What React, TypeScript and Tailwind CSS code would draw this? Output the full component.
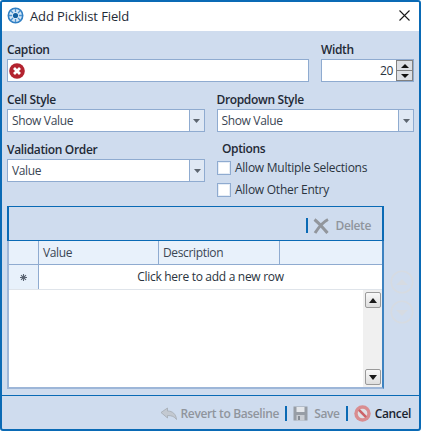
const AppIcon = () => (
  <svg width="17" height="17" viewBox="0 0 17 17">
    <circle cx="8.5" cy="8.5" r="7.2" fill="#d5e6f5" stroke="#2f7fc4" strokeWidth="1.6" />
    <circle cx="8.5" cy="8.5" r="2.6" fill="#14609f" />
    <path d="M8.5 2v3M8.5 12v3M2 8.5h3M12 8.5h3M4 4l2 2M11 11l2 2M13 4l-2 2M6 11l-2 2" stroke="#4b93d1" strokeWidth="1.3" />
  </svg>
);

const ErrorIcon = () => (
  <svg width="16" height="16" viewBox="0 0 16 16">
    <circle cx="8" cy="8" r="7.8" fill="#b3232f" />
    <path d="M5 5l6 6M11 5l-6 6" stroke="#fff" strokeWidth="2.8" />
  </svg>
);

const CloseIcon = () => (
  <svg width="11" height="11" viewBox="0 0 11 11">
    <path d="M0.5 0.5l10 10M10.5 0.5l-10 10" stroke="#1a1a1a" strokeWidth="1.1" />
  </svg>
);

const DeleteIcon = () => (
  <svg width="16" height="16" viewBox="0 0 16 16">
    <path d="M1.5 1.5C6 5 10 10 14.5 15" stroke="#92969c" strokeWidth="3" fill="none" />
    <path d="M15 1.5C10 4 5.5 9.5 2 15" stroke="#92969c" strokeWidth="3" fill="none" />
  </svg>
);

const RevertIcon = () => (
  <svg width="17" height="14" viewBox="0 0 17 14">
    <path d="M1 5.5L7.5 1v3c5 0 8.5 3 9 8.5C14.5 9.5 11.5 8.5 7.5 8.5V11z" fill="#c3c9d1" stroke="#a5abb3" strokeWidth="0.8" />
  </svg>
);

const SaveIcon = () => (
  <svg width="15" height="15" viewBox="0 0 15 15">
    <path d="M0.5 0.5h14v14h-14z" fill="#979da5" />
    <path d="M3.5 1h8v5h-8z" fill="#e4e7eb" />
    <path d="M3.5 9h8v5.5h-8z" fill="#c9cdd3" />
    <path d="M5 10h2v4H5z" fill="#868c94" />
  </svg>
);

const CancelIcon = () => (
  <svg width="17" height="17" viewBox="0 0 17 17">
    <circle cx="8.5" cy="8.5" r="8.2" fill="#d98d90" />
    <circle cx="8.5" cy="8.5" r="4.8" fill="#dfe2e7" />
    <path d="M4.9 4.9l7.2 7.2" stroke="#cc6367" strokeWidth="2.6" />
  </svg>
);

const CircleArrow = ({ up }: { up?: boolean }) => (
  <svg width="24" height="24" viewBox="0 0 24 24">
    <circle cx="12" cy="12" r="10.8" fill="none" stroke="#d6dbe2" strokeWidth="1.6" />
    <path d={up ? "M6 15h12l-6-6z" : "M6 10h12l-6 6z"} fill="#d6dbe2" />
  </svg>
);

const ScrollButton = ({ up }: { up?: boolean }) => (
  <div className="flex h-4 w-4 items-center justify-center rounded-[2px] border border-[#9a9a9a] bg-gradient-to-b from-[#f9f9f9] to-[#dedede]">
    <svg width="8" height="5" viewBox="0 0 8 5">
      <path d={up ? "M0 5h8L4 0z" : "M0 0h8L4 5z"} fill="#1a1a1a" />
    </svg>
  </div>
);

const Label = ({ children, short }: { children: string; short?: boolean }) => (
  <div
    className={
      short
        ? "flex h-[16px] items-center text-[12px] font-semibold leading-none text-[#1f2a36]"
        : "flex h-[18px] items-center text-[12px] font-semibold leading-none text-[#1f2a36]"
    }
  >
    {children}
  </div>
);

const Select = ({ value }: { value: string }) => (
  <div className="flex h-[23px] w-full border border-[#8fabd0] bg-white">
    <div className="flex flex-1 items-center pl-1 text-[12px] text-[#3a4654]">{value}</div>
    <div className="flex w-[15px] items-center justify-center border-l border-[#8fabd0] bg-[#dfe8f4]">
      <svg width="7" height="4" viewBox="0 0 7 4">
        <path d="M0 0h7L3.5 4z" fill="#5d6670" />
      </svg>
    </div>
  </div>
);

const Check = ({ text }: { text: string }) => (
  <div className="flex h-[22px] items-center gap-[4px]">
    <div className="h-[14px] w-[14px] border border-[#8fabd0] bg-white shadow-[inset_0_0_0_1px_#e6edf6]" />
    <span className="text-[12px] tracking-[-0.25px] text-[#2a3440]">{text}</span>
  </div>
);

export default function App() {
  return (
    <div className="h-[431px] w-[421px] overflow-hidden bg-white font-['Open_Sans','Liberation_Sans',sans-serif] tracking-[-0.35px]">
      <div className="flex h-full flex-col overflow-hidden rounded-[3px] border-2 border-[#0a6ab5] bg-[#cfdcee]">
        <div className="flex h-[29px] shrink-0 items-center justify-between bg-white pb-[2px] pl-[5px] pr-[9px]">
          <div className="flex items-center gap-[6px]">
            <AppIcon />
            <span className="pt-[2px] text-[13px] tracking-[-0.1px] text-[#1f2a36]">Add Picklist Field</span>
          </div>
          <CloseIcon />
        </div>

        <div className="flex flex-1 flex-col px-[5px] pt-[10px]">
          <div className="flex gap-[12px]">
            <div className="w-[302px]">
              <Label>Caption</Label>
              <div className="flex h-[23px] items-center border border-[#8fabd0] bg-white pl-[1px]">
                <ErrorIcon />
              </div>
            </div>
            <div className="w-[93px]">
              <Label>Width</Label>
              <div className="flex h-[23px] border border-[#8fabd0] bg-white">
                <div className="flex flex-1 items-center justify-end pr-[3px] text-[12px] text-[#2a3440]">20</div>
                <div className="flex w-[17px] flex-col border border-[#808080] bg-[#dcdfe4]">
                  <div className="flex flex-1 items-center justify-center border-b border-[#808080]">
                    <svg width="8" height="4" viewBox="0 0 8 4"><path d="M0 4h8L4 0z" fill="#111" /></svg>
                  </div>
                  <div className="flex flex-1 items-center justify-center">
                    <svg width="8" height="4" viewBox="0 0 8 4"><path d="M0 0h8L4 4z" fill="#111" /></svg>
                  </div>
                </div>
              </div>
            </div>
          </div>

          <div className="mt-[9px] flex gap-[12px]">
            <div className="w-[198px]">
              <Label>Cell Style</Label>
              <Select value="Show Value" />
            </div>
            <div className="w-[198px]">
              <Label>Dropdown Style</Label>
              <Select value="Show Value" />
            </div>
          </div>

          <div className="mt-[9px] flex gap-[12px]">
            <div className="w-[198px]">
              <Label>Validation Order</Label>
              <Select value="Value" />
            </div>
            <div>
              <div className="pl-[5px]">
                <Label short>Options</Label>
              </div>
              <Check text="Allow Multiple Selections" />
              <Check text="Allow Other Entry" />
            </div>
          </div>

          <div className="mt-[5px] flex gap-[6px]">
            <div className="flex h-[183px] w-[377px] flex-col">
              <div className="flex h-[35px] shrink-0 items-center justify-end border-x-2 border-y border-[#0a6ab5] pr-[11px] pt-[4px]">
                <div className="h-[15px] w-[2px] bg-[#0a6ab5]" />
                <div className="ml-[5px]"><DeleteIcon /></div>
                <span className="ml-[6px] text-[12px] font-semibold text-[#8f959d]">Delete</span>
              </div>
              <div className="flex min-h-0 flex-1 flex-col border-x-2 border-b-2 border-b-[#9db6d8] border-l-[#9db6d8] border-r-[#3d82c0]">
                <div className="flex h-[24px] shrink-0 border-b border-[#8fabd0] bg-[#e8f1fb] text-[12px] text-[#3a4654]">
                  <div className="w-[30px] border-r border-[#8fabd0]" />
                  <div className="flex w-[120px] items-center border-r border-[#8fabd0] pl-[4px]">Value</div>
                  <div className="flex w-[121px] items-center border-r border-[#8fabd0] pl-[4px]">Description</div>
                </div>
                <div className="flex h-[25px] shrink-0 border-b border-[#dfe4ea] bg-white">
                  <div className="flex w-[30px] items-center justify-center border-r border-[#8fabd0] bg-[#e8f1fb]">
                    <svg width="7" height="7" viewBox="0 0 9 9">
                      <path d="M4.5 0v9M0 4.5h9M1.3 1.3l6.4 6.4M7.7 1.3L1.3 7.7" stroke="#5a6472" strokeWidth="1.4" />
                    </svg>
                  </div>
                  <div className="flex flex-1 items-center justify-center text-[12px] tracking-[-0.3px] text-[#2a3440]">
                    Click here to add a new row
                  </div>
                </div>
                <div className="flex min-h-0 flex-1 justify-end bg-white">
                  <div className="flex w-[19px] flex-col items-center justify-between bg-[#f0f0f0] py-[2px]">
                    <ScrollButton up />
                    <ScrollButton />
                  </div>
                </div>
              </div>
            </div>
            <div className="flex flex-col gap-[6px] pt-[64px]">
              <CircleArrow up />
              <CircleArrow />
            </div>
          </div>
        </div>

        <div className="flex h-[34px] shrink-0 items-center justify-end border-t border-[#0a6ab5] pr-[8px] pt-[2px] text-[12px]">
          <RevertIcon />
          <span className="ml-[4px] font-semibold text-[#8f959d]">Revert to Baseline</span>
          <div className="mx-[6px] h-[15px] w-[2px] bg-[#0a6ab5]" />
          <SaveIcon />
          <span className="ml-[6px] font-semibold text-[#8f959d]">Save</span>
          <div className="mx-[6px] h-[15px] w-[2px] bg-[#0a6ab5]" />
          <CancelIcon />
          <span className="ml-[4px] font-semibold text-[#1a2430]">Cancel</span>
        </div>
      </div>
    </div>
  );
}
